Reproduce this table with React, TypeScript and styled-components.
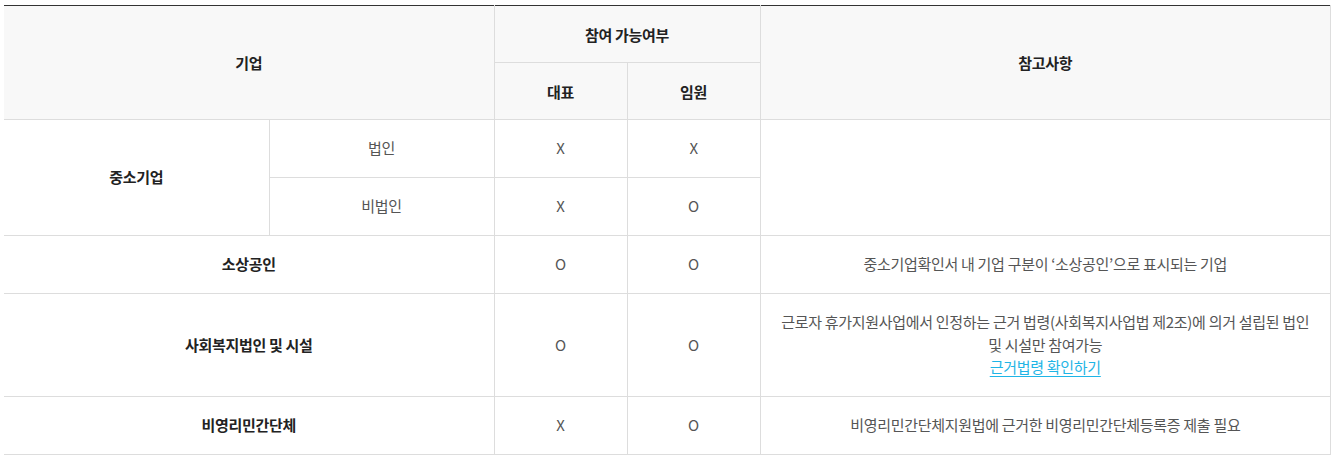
import styled, {createGlobalStyle} from 'styled-components'

const GlobalStyle = createGlobalStyle`
  body {
    margin: 0;
    background: #fff;
    font-family: 'Noto Sans CJK KR', 'Noto Sans', sans-serif;
  }
`

const Wrap = styled.div`
  padding: 5px 6px 0 4px;
`

const Table = styled.table`
  width: 1327px;
  border-collapse: collapse;
  table-layout: fixed;
  border-top: 1px solid #333;
  font-size: 15px;
  letter-spacing: -0.3px;
  color: #555;
`

const HeadCell = styled.th<{last?: boolean}>`
  height: 56px;
  padding: 0;
  background: #f8f8f8;
  font-weight: 700;
  color: #222;
  text-align: center;
  vertical-align: middle;
  border-bottom: 1px solid #ddd;
  border-left: 1px solid #ddd;
  border-right: ${({last}) => (last ? '1px solid #ddd' : '0')};
  &:first-child {
    border-left: 0;
  }
`

const Row = styled.tr<{tall?: boolean}>`
  height: ${({tall}) => (tall ? '103px' : '58px')};
`

const Cell = styled.td<{strong?: boolean; last?: boolean}>`
  padding: 0 ${({last}) => (last ? '20px' : '12px')};
  text-align: center;
  vertical-align: middle;
  line-height: 22.5px;
  font-weight: ${({strong}) => (strong ? 700 : 400)};
  color: ${({strong}) => (strong ? '#222' : '#555')};
  border-bottom: 1px solid #ddd;
  border-left: 1px solid #ddd;
  border-right: ${({last}) => (last ? '1px solid #ddd' : '0')};
  &:first-child {
    border-left: 0;
  }
`

const Link = styled.a`
  color: #1fb5e6;
  text-decoration: underline;
  text-underline-offset: 3px;
`

export default function App() {
  return (
    <Wrap>
      <GlobalStyle />
      <Table>
        <colgroup>
          <col style={{width: 265}} />
          <col style={{width: 225}} />
          <col style={{width: 133}} />
          <col style={{width: 133}} />
          <col />
        </colgroup>
        <thead>
          <tr>
            <HeadCell colSpan={2} rowSpan={2}>기업</HeadCell>
            <HeadCell colSpan={2}>참여 가능여부</HeadCell>
            <HeadCell rowSpan={2} last>참고사항</HeadCell>
          </tr>
          <tr>
            <HeadCell style={{borderLeft: '1px solid #ddd'}}>대표</HeadCell>
            <HeadCell>임원</HeadCell>
          </tr>
        </thead>
        <tbody>
          <Row>
            <Cell strong rowSpan={2}>중소기업</Cell>
            <Cell>법인</Cell>
            <Cell>X</Cell>
            <Cell>X</Cell>
            <Cell rowSpan={2} last />
          </Row>
          <Row>
            <Cell style={{borderLeft: '1px solid #ddd'}}>비법인</Cell>
            <Cell>X</Cell>
            <Cell>O</Cell>
          </Row>
          <Row>
            <Cell strong colSpan={2}>소상공인</Cell>
            <Cell>O</Cell>
            <Cell>O</Cell>
            <Cell last>중소기업확인서 내 기업 구분이 ‘소상공인’으로 표시되는 기업</Cell>
          </Row>
          <Row tall>
            <Cell strong colSpan={2}>사회복지법인 및 시설</Cell>
            <Cell>O</Cell>
            <Cell>O</Cell>
            <Cell last>
              근로자 휴가지원사업에서 인정하는 근거 법령(사회복지사업법 제2조)에 의거 설립된 법인 및 시설만 참여가능
              <br />
              <Link href="#">근거법령 확인하기</Link>
            </Cell>
          </Row>
          <Row>
            <Cell strong colSpan={2}>비영리민간단체</Cell>
            <Cell>X</Cell>
            <Cell>O</Cell>
            <Cell last>비영리민간단체지원법에 근거한 비영리민간단체등록증 제출 필요</Cell>
          </Row>
        </tbody>
      </Table>
    </Wrap>
  )
}
